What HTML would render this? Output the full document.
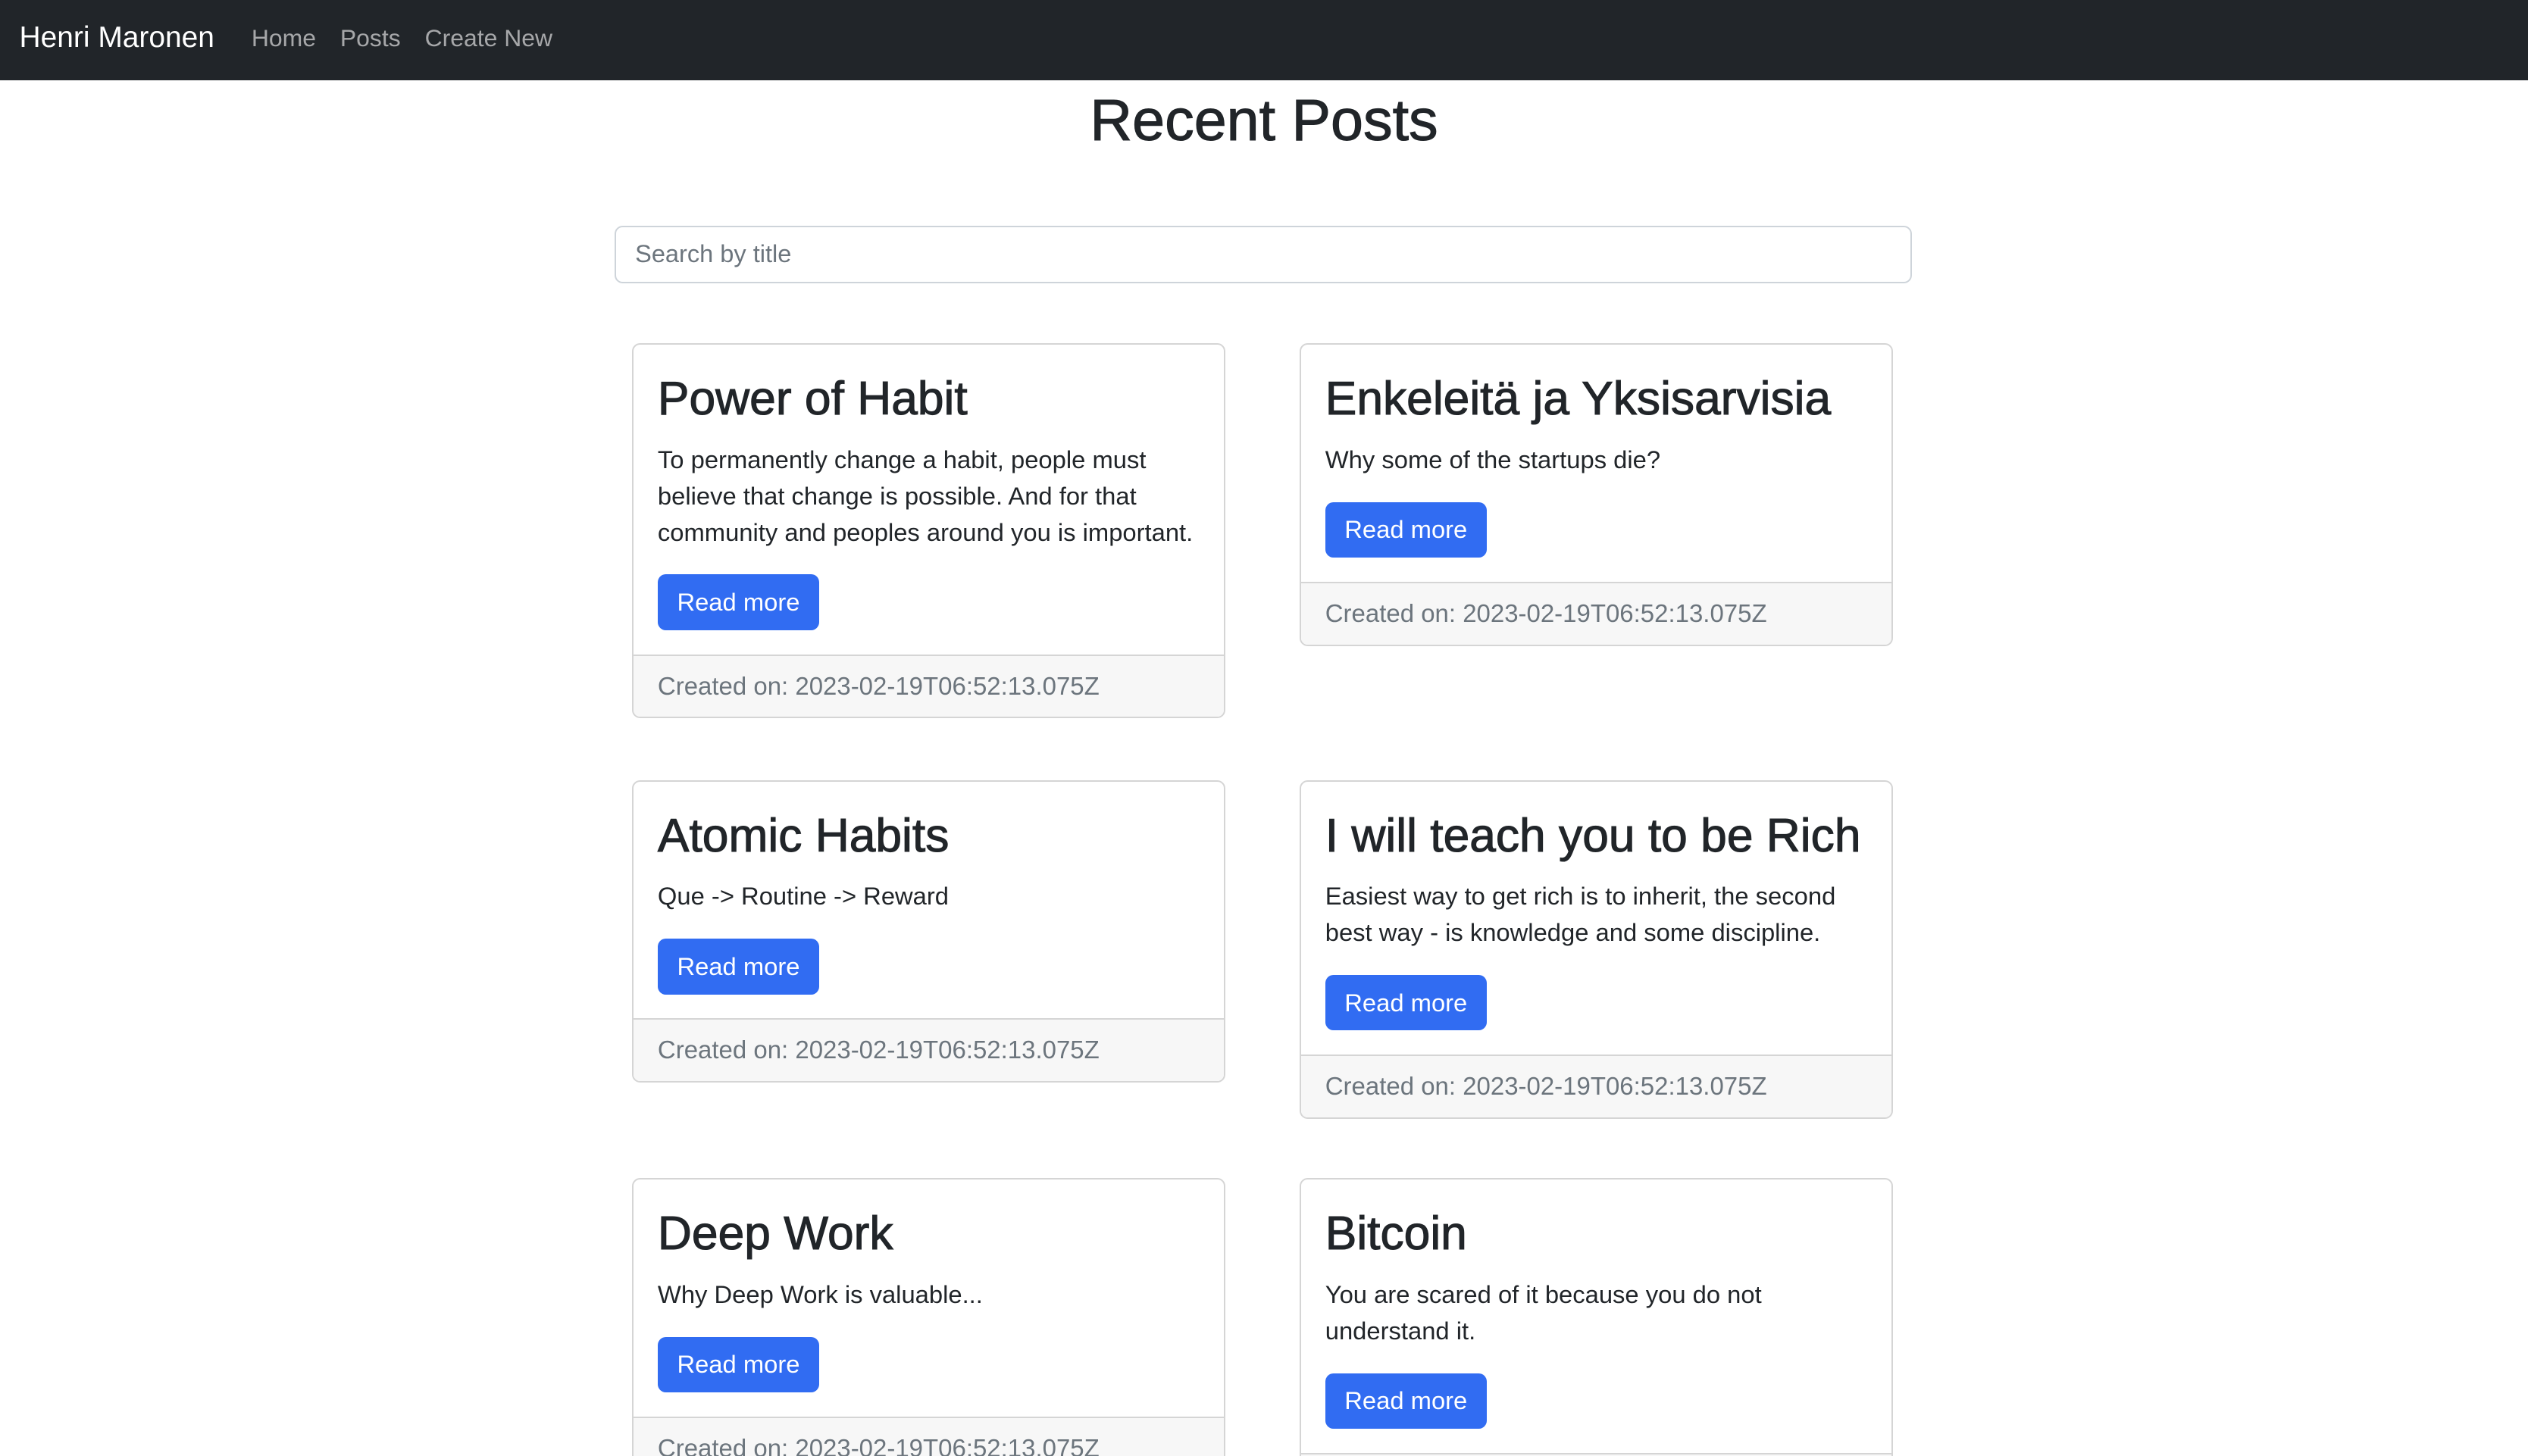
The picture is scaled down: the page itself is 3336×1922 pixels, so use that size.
<!DOCTYPE html>
<html><head><meta charset="utf-8">
<style>
html{zoom:2.1276;height:903px;overflow:hidden;}
body{margin:0;width:1568px;height:903px;overflow:hidden;background:#fff;font-family:"Liberation Sans",sans-serif;color:#212529;position:relative;}
.nav{height:50px;background:#212529;position:relative;}
.brand{position:absolute;left:12px;top:13px;font-size:18.3px;color:#fff;}
.links{position:absolute;left:156px;top:15px;font-size:15px;color:rgba(255,255,255,.6);}
.links span{margin-right:15px;}
h1{margin:0;position:absolute;top:52px;left:0;width:1568px;text-align:center;font-weight:normal;-webkit-text-stroke:0.5px #212529;font-size:36.3px;line-height:46px;}
.search{position:absolute;left:381px;top:140px;width:803px;height:34px;border:1px solid #ced4da;border-radius:5px;}
.search span{position:absolute;left:12px;top:8px;font-size:15.3px;color:#6c757d;}
.card{position:absolute;width:366px;border:1px solid #d5d5d5;border-radius:5px;overflow:hidden;background:#fff;}
.body{padding:15px;}
.t{font-size:29.3px;line-height:38px;font-weight:normal;-webkit-text-stroke:0.5px #212529;margin:0 0 7px;white-space:nowrap;}
.p{font-size:15.4px;line-height:22.5px;margin:0 0 15px;}
.btn{display:inline-block;background:#316cf2;color:#fff;font-size:15.4px;line-height:22.5px;padding:6px 12px;border-radius:5px;}
.f{background:#f7f7f7;border-top:1px solid #d5d5d5;padding:8px 15px;font-size:15.5px;line-height:22px;color:#6c757d;}
</style></head><body>
<div class="nav"><div class="brand">Henri Maronen</div><div class="links"><span>Home</span><span>Posts</span><span>Create New</span></div></div>
<h1>Recent Posts</h1>
<div class="search"><span>Search by title</span></div>

<div class="card" style="left:392px;top:213px"><div class="body"><div class="t">Power of Habit</div><div class="p">To permanently change a habit, people must believe that change is possible. And for that community and peoples around you is important.</div><span class="btn">Read more</span></div><div class="f">Created on: 2023-02-19T06:52:13.075Z</div></div>

<div class="card" style="left:806px;top:213px"><div class="body"><div class="t">Enkeleitä ja Yksisarvisia</div><div class="p">Why some of the startups die?</div><span class="btn">Read more</span></div><div class="f">Created on: 2023-02-19T06:52:13.075Z</div></div>

<div class="card" style="left:392px;top:484px"><div class="body"><div class="t">Atomic Habits</div><div class="p">Que -&gt; Routine -&gt; Reward</div><span class="btn">Read more</span></div><div class="f">Created on: 2023-02-19T06:52:13.075Z</div></div>

<div class="card" style="left:806px;top:484px"><div class="body"><div class="t">I will teach you to be Rich</div><div class="p">Easiest way to get rich is to inherit, the second best way - is knowledge and some discipline.</div><span class="btn">Read more</span></div><div class="f">Created on: 2023-02-19T06:52:13.075Z</div></div>

<div class="card" style="left:392px;top:731px"><div class="body"><div class="t">Deep Work</div><div class="p">Why Deep Work is valuable...</div><span class="btn">Read more</span></div><div class="f">Created on: 2023-02-19T06:52:13.075Z</div></div>

<div class="card" style="left:806px;top:731px"><div class="body"><div class="t">Bitcoin</div><div class="p">You are scared of it because you do not understand it.</div><span class="btn">Read more</span></div><div class="f">Created on: 2023-02-19T06:52:13.075Z</div></div>
</body></html>
